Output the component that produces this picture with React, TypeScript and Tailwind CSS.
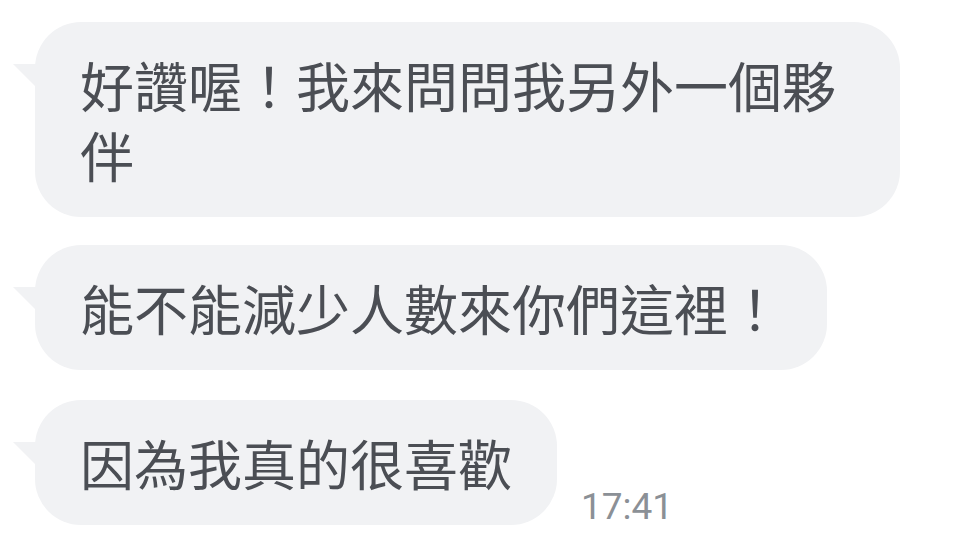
import React from "react";

interface BubbleProps {
  text: string;
  time?: string;
  className?: string;
}

const Tail = () => (
  <svg
    className="absolute left-[-22px] top-[42px]"
    width="26"
    height="26"
    viewBox="0 0 26 26"
  >
    <polygon points="0,0 26,0 26,26" fill="#f1f2f4" />
  </svg>
);

const Bubble: React.FC<BubbleProps> = ({ text, time, className }) => {
  return (
    <div className={"flex items-end " + (className ?? "")}>
      <div className="relative w-fit max-w-[865px] rounded-[46px] bg-[#f1f2f4] px-[45px] py-[27.5px] text-[54px] leading-[70px] text-[#4b4e54]">
        <Tail />
        {text}
      </div>
      {time && (
        <div className="ml-[24px] font-['Roboto',sans-serif] text-[37px] leading-none text-[#8b9096]">
          {time}
        </div>
      )}
    </div>
  );
};

export default function App() {
  return (
    <div className="h-[549px] w-[960px] overflow-hidden bg-white pl-[35px] pt-[22px] font-['Noto_Sans_CJK_TC','Noto_Sans_CJK_SC',sans-serif]">
      <div className="flex flex-col gap-[28px]">
        <Bubble text="好讚喔！我來問問我另外一個夥伴" />
        <Bubble text="能不能減少人數來你們這裡！" />
        <Bubble className="mt-[2px]" text="因為我真的很喜歡" time="17:41" />
      </div>
    </div>
  );
}
